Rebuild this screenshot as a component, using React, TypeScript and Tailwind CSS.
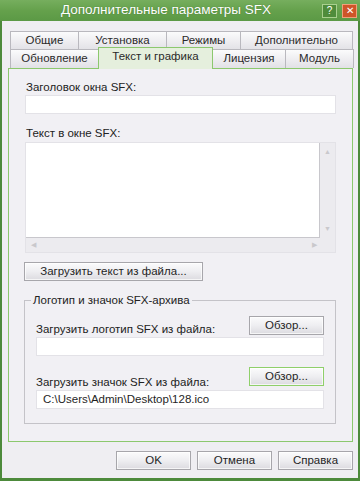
import React from "react";

const font = { fontFamily: '"Liberation Sans", Arial, sans-serif' };

function Tab({ label, w }: { label: string; w: string }) {
  return (
    <div
      className={`${w} h-[19px] flex items-center justify-center border border-[#b9b8be] border-b-0 bg-gradient-to-b from-[#fbfbfc] to-[#e2e1e6] text-[11.5px] text-[#2a2a2a] -ml-px first:ml-0`}
    >
      {label}
    </div>
  );
}

function Btn({ label, w, green }: { label: string; w: string; green?: boolean }) {
  return (
    <div
      className={`${w} h-[19px] flex items-center justify-center border ${
        green ? "border-[#8fcf6a]" : "border-[#a7a6ab]"
      } bg-gradient-to-b from-[#fbfbfc] via-[#eeeef1] to-[#dcdbe0] text-[11.5px] text-[#1f1f1f] shadow-[inset_0_0_0_1px_rgba(255,255,255,0.7)]`}
    >
      {label}
    </div>
  );
}

function Input({ value }: { value?: string }) {
  return (
    <div className="h-[19px] bg-white border border-[#e3e2e7] flex items-center px-[6px] text-[11.5px] text-[#1f1f1f]">
      {value}
    </div>
  );
}

const label = "text-[11.5px] text-[#222] leading-[14px]";

export default function App() {
  return (
    <div style={font} className="w-[360px] h-[481px] flex flex-col overflow-hidden bg-[#efeef2]">
      {/* title bar */}
      <div className="h-[21px] flex items-center bg-gradient-to-b from-[#76ae5e] via-[#65a14c] to-[#5b9945] relative shrink-0">
        <div className="flex-1 text-center text-white text-[13.5px] pl-[10px] [text-shadow:0_0_1px_rgba(40,80,30,0.6)]">
          Дополнительные параметры SFX
        </div>
        <div className="flex gap-[5px] pr-[3px]">
          <div className="w-[15px] h-[14px] border border-[#a9d08f] bg-[#4f8c3b] text-white text-[10px] leading-[12px] text-center">?</div>
          <div className="w-[15px] h-[14px] border border-[#f0a07a] bg-[#cf5529] text-white text-[10px] leading-[12px] text-center">✕</div>
        </div>
      </div>
      {/* body */}
      <div className="flex-1 flex flex-col border-l-2 border-r-2 border-b-[3px] border-[#4d8a3b] bg-[#efeef2]">
        {/* tabs */}
        <div className="pt-[10px] pl-[8px] flex flex-col">
          <div className="flex">
            <Tab label="Общие" w="w-[69px]" />
            <Tab label="Установка" w="w-[89px]" />
            <Tab label="Режимы" w="w-[75px]" />
            <Tab label="Дополнительно" w="w-[113px]" />
          </div>
          <div className="flex items-end -mt-[1px] h-[19px]">
            <Tab label="Обновление" w="w-[89px]" />
            <div className="w-[115px] h-[22px] -ml-px -mb-px relative z-10 flex items-center justify-center pb-[3px] border border-[#8cc86e] border-b-0 bg-[#e5efdd] text-[11.5px] text-[#2a2a2a]">
              Текст и графика
            </div>
            <Tab label="Лицензия" w="w-[74px]" />
            <Tab label="Модуль" w="w-[69px]" />
          </div>
        </div>
        {/* panel */}
        <div className="ml-[6px] mr-[5px] h-[374px] border border-[#8cc86e] bg-[#f1f0f4] flex flex-col px-[16px] pt-[11px]">
          <div className={`${label} pl-[1px]`}>Заголовок окна SFX:</div>
          <div className="mt-[1px]">
            <Input />
          </div>
          <div className={`${label} mt-[12px] pl-[1px]`}>Текст в окне SFX:</div>
          <div className="mt-[2px] h-[111px] flex flex-col border border-[#e3e2e7] bg-[#ecebef]">
            <div className="flex flex-1">
              <div className="flex-1 bg-white border-r border-b border-[#c8c7cc]" />
              <div className="w-[15px] flex flex-col justify-between items-center py-[4px] text-[7px] text-[#c9c8cc]">
                <span>▲</span>
                <span>▼</span>
              </div>
            </div>
            <div className="h-[14px] flex justify-between items-center px-[5px] pr-[18px] text-[7px] text-[#c9c8cc]">
              <span>◀</span>
              <span>▶</span>
            </div>
          </div>
          <div className="mt-[9px] -ml-[1px]">
            <Btn label="Загрузить текст из файла..." w="w-[179px]" />
          </div>
          {/* group box */}
          <div className="mt-[19px] -ml-[1px] h-[124px] border border-[#c4c3c8] relative px-[11px] flex flex-col">
            <div className={`${label} absolute -top-[8px] left-[6px] px-[2px] bg-[#f1f0f4]`}>
              Логотип и значок SFX-архива
            </div>
            <div className="mt-[15px] flex items-end justify-between">
              <div className={`${label} mb-[-1px]`}>Загрузить логотип SFX из файла:</div>
              <Btn label="Обзор..." w="w-[75px]" />
            </div>
            <div className="mt-[2px]">
              <Input />
            </div>
            <div className="mt-[11px] flex items-end justify-between">
              <div className={`${label} mb-[-3px]`}>Загрузить значок SFX из файла:</div>
              <Btn label="Обзор..." w="w-[75px]" green />
            </div>
            <div className="mt-[4px]">
              <Input value="C:\Users\Admin\Desktop\128.ico" />
            </div>
          </div>
        </div>
        {/* bottom buttons */}
        <div className="flex justify-end gap-[6px] pr-[5px] mt-[9px]">
          <Btn label="OK" w="w-[75px]" />
          <Btn label="Отмена" w="w-[75px]" />
          <Btn label="Справка" w="w-[75px]" />
        </div>
      </div>
    </div>
  );
}
